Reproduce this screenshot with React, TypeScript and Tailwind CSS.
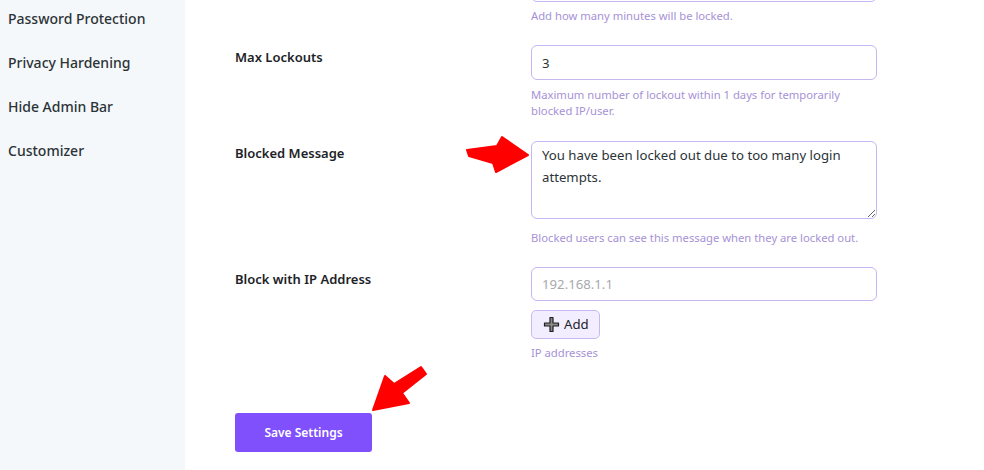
import React from 'react';

const font = { fontFamily: '"Noto Sans", "Open Sans", sans-serif' };

const menu = ['Password Protection', 'Privacy Hardening', 'Hide Admin Bar', 'Customizer'];

function PlusIcon() {
  return (
    <svg width="17" height="17" viewBox="0 0 17 17" aria-hidden="true">
      <path
        d="M7 1.5h3v5.5h5.5v3H10v5.5H7V10H1.5V7H7z"
        fill="#8a8a8a"
        stroke="#1f1f1f"
        strokeWidth="1.2"
        strokeLinejoin="round"
      />
    </svg>
  );
}

function Label({ children }: { children: React.ReactNode }) {
  return <div className="pt-[3px] text-[13px] leading-[18px] font-semibold text-[#1d2327]">{children}</div>;
}

function Help({ children, className = '' }: { children: React.ReactNode; className?: string }) {
  return (
    <p className={`whitespace-nowrap text-[11.25px] leading-[16px] text-[#a692d6] ${className}`}>{children}</p>
  );
}

const inputCls =
  'block w-full rounded-[6px] border border-[#c6b6f1] bg-white px-[10px] text-[13.2px] text-[#2c3338] outline-none placeholder:text-[#a7aaad]';

export default function App() {
  return (
    <div className="relative flex h-[470px] w-[984px] overflow-hidden bg-white" style={font}>
      <aside className="w-[185px] shrink-0 bg-[#f5f8fa]">
        <nav className="-mt-[4px] flex flex-col">
          {menu.map((m) => (
            <a key={m} className="flex h-[44px] items-center px-2 text-[14px] font-medium text-[#2c3338]">
              {m}
            </a>
          ))}
        </nav>
      </aside>

      <main className="flex-1 pl-[50px]">
        <div className="grid grid-cols-[296px_346px]">
          <div />
          <div>
            <input className={`${inputCls} -mt-[33px] h-[35px]`} defaultValue="15" />
            <Help className="mt-[6px]">Add how many minutes will be locked.</Help>
          </div>
        </div>

        <div className="mt-[21px] grid grid-cols-[296px_346px]">
          <Label>Max Lockouts</Label>
          <div>
            <input className={`${inputCls} h-[35px]`} defaultValue="3" />
            <Help className="mt-[7px]">
              Maximum number of lockout within 1 days for temporarily
              <br />
              blocked IP/user.
            </Help>
          </div>
        </div>

        <div className="mt-[22px] grid grid-cols-[296px_346px]">
          <Label>Blocked Message</Label>
          <div>
            <textarea
              className={`${inputCls} h-[78px] resize-y pt-[2px] leading-[22px]`}
              defaultValue="You have been locked out due to too many login attempts."
            />
            <Help className="mt-[11px]">Blocked users can see this message when they are locked out.</Help>
          </div>
        </div>

        <div className="mt-[21px] grid grid-cols-[296px_346px]">
          <Label>Block with IP Address</Label>
          <div>
            <input className={`${inputCls} h-[34px]`} placeholder="192.168.1.1" />
            <button className="mt-[9px] flex h-[29px] items-center gap-[4px] rounded-[5px] border border-[#c9b9f3] bg-[#f2eeff] pl-[11px] pr-[10px] text-[13.2px] text-[#1d2327]">
              <PlusIcon />
              Add
            </button>
            <Help className="mt-[6px]">IP addresses</Help>
          </div>
        </div>

        <button className="mt-[52px] h-[39px] w-[137px] rounded-[3px] bg-[#8050fd] text-[12px] font-semibold text-white">
          Save Settings
        </button>
      </main>

      <svg className="pointer-events-none absolute left-0 top-0" width="984" height="470" aria-hidden="true">
        <polygon
          points="467,150 497,146 502,137 528,155 496,172 493,163 469,156"
          fill="#ff0000"
          stroke="#ff0000"
          strokeWidth="2"
          strokeLinejoin="round"
        />
        <polygon
          points="421,367 426,374 402,393 409,403 373,410 385,376 394,384"
          fill="#ff0000"
          stroke="#ff0000"
          strokeWidth="2"
          strokeLinejoin="round"
        />
      </svg>
    </div>
  );
}
